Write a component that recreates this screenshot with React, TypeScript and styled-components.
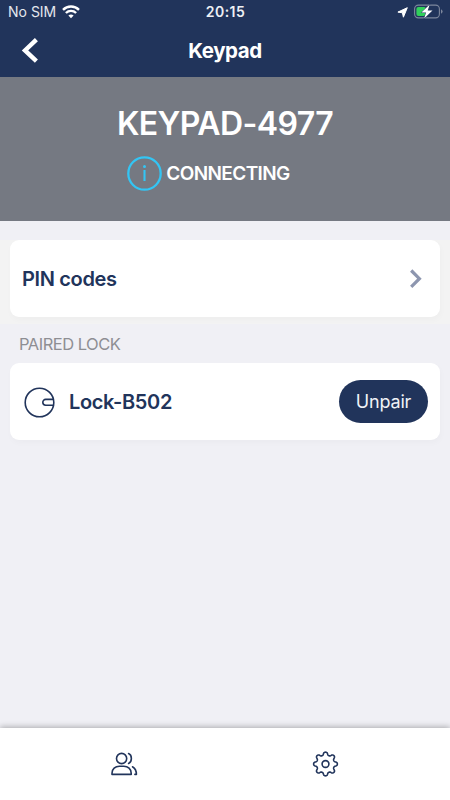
import React from "react";
import styled, { createGlobalStyle } from "styled-components";

const NAVY = "#21345b";

const GlobalStyle = createGlobalStyle`
  * { box-sizing: border-box; }
  body {
    margin: 0;
    background: #f0f0f5;
    font-family: Inter, "Liberation Sans", sans-serif;
    -webkit-font-smoothing: antialiased;
  }
  svg { display: block; flex: none; }
`;

const Screen = styled.div`
  width: 450px;
  height: 800px;
  display: flex;
  flex-direction: column;
  background: #f0f0f5;
  overflow: hidden;
`;

const Text = styled.span<{ $size: number; $weight: number; $color: string; $spacing?: number }>`
  font-size: ${(p) => p.$size}px;
  font-weight: ${(p) => p.$weight};
  color: ${(p) => p.$color};
  letter-spacing: ${(p) => p.$spacing ?? 0}px;
  line-height: 1.2;
  white-space: nowrap;
`;

const CardTitle = styled.span`
  padding-top: 1px;
  font-size: 20px;
  font-weight: 570;
  line-height: 24px;
  letter-spacing: -0.35px;
  color: ${NAVY};
  white-space: nowrap;
`;

const TopBar = styled.header`
  height: 77px;
  background: ${NAVY};
`;

const StatusBar = styled.div`
  height: 25px;
  display: grid;
  grid-template-columns: 1fr auto 1fr;
  align-items: center;
  padding: 0 7px 0 8px;
`;

const StatusGroup = styled.div<{ $end?: boolean }>`
  display: flex;
  align-items: center;
  gap: 6px;
  justify-content: ${(p) => (p.$end ? "flex-end" : "flex-start")};
`;

const TitleBar = styled.div`
  height: 52px;
  display: grid;
  grid-template-columns: 60px 1fr 60px;
  align-items: center;
  justify-items: center;
`;

const BackButton = styled.button`
  border: 0;
  padding: 0;
  background: none;
`;

const Banner = styled.section`
  height: 144px;
  padding-top: 28px;
  display: flex;
  flex-direction: column;
  align-items: center;
  background: #757982;
`;

const Connection = styled.div`
  display: flex;
  align-items: center;
  gap: 4px;
  margin: 13px 33px 0 0;

  span {
    padding-top: 2px;
  }
`;

const Section = styled.section<{ $tinted?: boolean }>`
  background: ${(p) => (p.$tinted ? "#f3f3f3" : "transparent")};
  padding: 0 10px 7px;
  margin-top: ${(p) => (p.$tinted ? 19 : 0)}px;
`;

const Card = styled.div`
  height: 77px;
  border-radius: 9px;
  background: #fff;
  box-shadow: 1px 3px 6px rgba(0, 0, 0, 0.025);
  display: flex;
  align-items: center;
  padding: 0 12px;
`;

const Grow = styled.div`
  flex: 1;
  display: flex;
  align-items: center;
`;

const SectionLabel = styled.div`
  height: 39px;
  display: flex;
  align-items: center;
  padding: 2px 0 0 19px;
`;

const LockIconSlot = styled.div`
  padding: 1px 14px 0 2px;
`;

const UnpairButton = styled.button`
  width: 89px;
  height: 43px;
  padding: 0;
  border: 0;
  border-radius: 22px;
  background: ${NAVY};
  font-family: inherit;
`;

const TabBar = styled.nav`
  height: 72px;
  margin-top: auto;
  padding: 0 24px 0 23px;
  display: grid;
  grid-template-columns: 1fr 1fr;
  align-items: center;
  justify-items: center;
  background: #fff;
  box-shadow: 0 -1px 6px rgba(0, 0, 0, 0.3);
`;

const WifiIcon = () => (
  <svg width="18" height="14" viewBox="0 0 18 14" fill="none" stroke="#fff" strokeWidth="2.4">
    <path d="M1 4.8a11.4 11.4 0 0 1 16 0" />
    <path d="M3.9 8a7.3 7.3 0 0 1 10.2 0" />
    <path d="M6.4 10.6Q9 8.6 11.6 10.6L9 13.2Z" fill="#fff" stroke="none" />
  </svg>
);

const LocationIcon = () => (
  <svg width="11" height="11" viewBox="0 0 11 11">
    <path d="M10.3.7 6.4 10.2 5.4 5.8.9 5.1Z" fill="#fff" stroke="#fff" strokeWidth="1" strokeLinejoin="round" />
  </svg>
);

const BatteryIcon = () => (
  <svg width="29" height="17" viewBox="0 0 29 17">
    <rect x=".6" y="1.1" width="24.8" height="12.8" rx="3.8" fill="none" stroke="#7d879d" strokeWidth="1.1" />
    <path d="M27 5.3q1.6.7 1.6 2.2T27 9.7Z" fill="#7d879d" />
    <rect x="2.4" y="2.9" width="9.6" height="9.2" rx="2" fill="#31cf5b" />
    <path d="M15.7.6 7.4 8.5h4.7l-2 6.1 8.4-8h-4.8Z" fill="#fff" stroke={NAVY} strokeWidth="1" paintOrder="stroke" />
  </svg>
);

const BackIcon = () => (
  <svg width="18" height="26" viewBox="0 0 18 26" fill="none" stroke="#fff" strokeWidth="4.4">
    <path d="M15.4 1.6 4 12.4 15.4 23.2" />
  </svg>
);

const InfoIcon = () => (
  <svg width="35" height="35" viewBox="0 0 35 35">
    <circle cx="17.5" cy="17.5" r="16.2" fill="none" stroke="#33c5f4" strokeWidth="2.3" />
    <circle cx="17.5" cy="10.6" r="1.5" fill="#33c5f4" />
    <path d="M17.5 14v11" stroke="#33c5f4" strokeWidth="2.1" />
  </svg>
);

const ChevronIcon = () => (
  <svg width="19" height="22" viewBox="0 0 19 22" fill="none" stroke="#8d96af" strokeWidth="3.2">
    <path d="m2.2 2.5 8.2 8.2-8.2 8.2" />
  </svg>
);

const LockIcon = () => (
  <svg width="31" height="31" viewBox="0 0 31 31" fill="none" stroke={NAVY} strokeWidth="1.6">
    <circle cx="15.5" cy="15.5" r="14.3" />
    <path d="M29.5 12.4H21.7a2.9 2.9 0 0 0 0 5.8h7.8" />
  </svg>
);

const PeopleIcon = () => (
  <svg width="28" height="26" viewBox="0 0 28 26" fill="none" stroke={NAVY} strokeWidth="1.6" strokeLinecap="round" strokeLinejoin="round">
    <circle cx="11.6" cy="7.5" r="5.1" />
    <path d="M2 23.4v-1.2c0-4.2 3.2-6.9 7.4-6.9h4.4c4.2 0 7.4 2.7 7.4 6.9v1.2Z" />
    <path d="M18.6 2.6c3.7 1.6 3.7 8.2 0 9.8M22.5 15.8c2.4 1.4 3.9 3.9 3.9 7.6h-1.5" />
  </svg>
);

const gearPath = (() => {
  const points: string[] = [];
  for (let i = 0; i < 160; i++) {
    const angle = (i / 160) * Math.PI * 2;
    const wave = Math.tanh(1.4 * Math.cos(8 * angle)) / Math.tanh(1.4);
    const r = 10.4 + 1.45 * wave;
    points.push(`${(13.5 + r * Math.cos(angle)).toFixed(2)} ${(13 + r * Math.sin(angle)).toFixed(2)}`);
  }
  return `M${points.join("L")}Z`;
})();

const GearIcon = () => (
  <svg width="27" height="27" viewBox="0 0 27 27" fill="none" stroke={NAVY} strokeWidth="1.6" strokeLinejoin="round">
    <path d={gearPath} />
    <circle cx="13.5" cy="13" r="3.4" />
  </svg>
);

export default function App() {
  return (
    <>
      <GlobalStyle />
      <Screen>
        <TopBar>
          <StatusBar>
            <StatusGroup>
              <Text $size={14} $weight={400} $color="#e4e7ee">No SIM</Text>
              <WifiIcon />
            </StatusGroup>
            <Text $size={14} $weight={560} $color="#eef0f4" $spacing={0.5}>20:15</Text>
            <StatusGroup $end>
              <LocationIcon />
              <BatteryIcon />
            </StatusGroup>
          </StatusBar>
          <TitleBar>
            <BackButton aria-label="Back"><BackIcon /></BackButton>
            <Text $size={20.5} $weight={650} $color="#fff" $spacing={-0.4}>Keypad</Text>
          </TitleBar>
        </TopBar>
        <Banner>
          <Text $size={32} $weight={640} $color="#fff" $spacing={-0.6}>KEYPAD-4977</Text>
          <Connection>
            <InfoIcon />
            <Text $size={19} $weight={600} $color="#fff" $spacing={-0.6}>CONNECTING</Text>
          </Connection>
        </Banner>
        <Section $tinted>
          <Card>
            <Grow><CardTitle>PIN codes</CardTitle></Grow>
            <ChevronIcon />
          </Card>
        </Section>
        <SectionLabel>
          <Text $size={16.5} $weight={400} $color="#8e8e93" $spacing={-0.5}>PAIRED LOCK</Text>
        </SectionLabel>
        <Section>
          <Card>
            <Grow>
              <LockIconSlot><LockIcon /></LockIconSlot>
              <CardTitle>Lock-B502</CardTitle>
            </Grow>
            <UnpairButton>
              <Text $size={18} $weight={400} $color="#f0f2f6" $spacing={-0.2}>Unpair</Text>
            </UnpairButton>
          </Card>
        </Section>
        <TabBar>
          <PeopleIcon />
          <GearIcon />
        </TabBar>
      </Screen>
    </>
  );
}
